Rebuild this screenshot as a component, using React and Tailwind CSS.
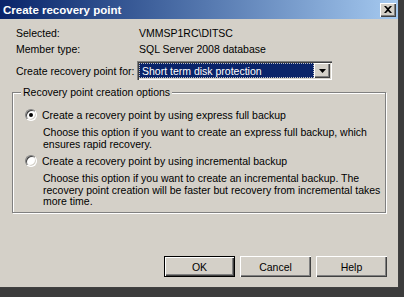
import React from "react";

function Radio({ checked }) {
  return (
    <span className="relative inline-block w-[12px] h-[12px] shrink-0 rounded-full bg-white border border-t-[#808080] border-l-[#808080] border-b-white border-r-white shadow-[inset_1px_1px_0_#404040,inset_-1px_-1px_0_#d4d0c8]">
      {checked && (
        <span className="absolute left-[3px] top-[3px] w-[4px] h-[4px] rounded-full bg-black" />
      )}
    </span>
  );
}

function Button({ children, primary }) {
  return (
    <button
      className={
        primary
          ? "w-[71px] h-[21px] bg-[#d4d0c8] border border-black shadow-[inset_1px_1px_0_#fff,inset_-1px_-1px_0_#404040,inset_-2px_-2px_0_#808080] text-black"
          : "w-[71px] h-[21px] bg-[#d4d0c8] shadow-[inset_1px_1px_0_#fff,inset_-1px_-1px_0_#404040,inset_-2px_-2px_0_#808080] text-black"
      }
    >
      {children}
    </button>
  );
}

export default function App() {
  return (
    <div className="w-[404px] h-[297px] bg-[#3c3c3c] font-['Liberation_Sans',Arial,sans-serif] text-[10.5px] text-black leading-[12px] overflow-hidden">
      <div className="w-[399px] h-[288px] bg-[#d4d0c8] flex flex-col border-r border-b border-[#404040]">
        {/* title bar */}
        <div className="h-[19px] flex items-center justify-between pl-[3px] pr-[2px] bg-gradient-to-r from-[#0a246a] to-[#a6caf0]">
          <span className="text-white font-bold text-[11.5px]">Create recovery point</span>
          <span className="w-[16px] h-[14px] bg-[#d4d0c8] flex items-center justify-center shadow-[inset_1px_1px_0_#fff,inset_-1px_-1px_0_#404040,inset_-2px_-2px_0_#808080]">
            <svg width="8" height="7" viewBox="0 0 8 7">
              <path d="M0 0h2l2 2 2-2h2L5 3.5 8 7H6L4 5 2 7H0l3-3.5z" fill="#000" />
            </svg>
          </span>
        </div>

        <div className="flex flex-col pl-[16px] pt-[6px]">
          <div className="flex h-[16px] items-center">
            <span className="w-[123px]">Selected:</span>
            <span>VMMSP1RC\DITSC</span>
          </div>
          <div className="flex h-[16px] items-center">
            <span className="w-[123px]">Member type:</span>
            <span>SQL Server 2008 database</span>
          </div>
          <div className="flex items-center mt-[4px]">
            <span className="w-[121px] whitespace-nowrap">Create recovery point for:</span>
            <div className="w-[195px] h-[19px] bg-white flex items-stretch p-[2px] shadow-[inset_1px_1px_0_#808080,inset_2px_2px_0_#404040,inset_-1px_-1px_0_#fff,inset_-2px_-2px_0_#d4d0c8]">
              <div className="flex-1 bg-[#0a246a] text-white flex items-center pl-[2px] border border-dotted border-[#c0c0c0]">
                Short term disk protection
              </div>
              <div className="w-[16px] bg-[#d4d0c8] flex items-center justify-center shadow-[inset_1px_1px_0_#fff,inset_-1px_-1px_0_#404040,inset_-2px_-2px_0_#808080]">
                <svg width="7" height="4" viewBox="0 0 7 4">
                  <path d="M0 0h7L3.5 4z" fill="#000" />
                </svg>
              </div>
            </div>
          </div>
        </div>

        {/* group box */}
        <div className="relative mx-[12px] mt-[12px] h-[121px] border border-[#808080] shadow-[1px_1px_0_#fff,inset_1px_1px_0_#fff]">
          <span className="absolute left-[8px] top-[-7px] px-[2px] bg-[#d4d0c8]">
            Recovery point creation options
          </span>
          <div className="flex flex-col pl-[12px] pt-[16px]">
            <div className="flex items-center gap-[5px]">
              <Radio checked />
              <span>Create a recovery point by using express full backup</span>
            </div>
            <p className="pl-[18px] mt-[6px] leading-[11.5px] whitespace-nowrap">
              Choose this option if you want to create an express full backup, which
              <br />
              ensures rapid recovery.
            </p>
            <div className="flex items-center gap-[5px] mt-[5px]">
              <Radio />
              <span>Create a recovery point by using incremental backup</span>
            </div>
            <p className="pl-[18px] mt-[6px] leading-[11.5px] whitespace-nowrap">
              Choose this option if you want to create an incremental backup. The
              <br />
              recovery point creation will be faster but recovery from incremental takes
              <br />
              more time.
            </p>
          </div>
        </div>

        <div className="flex justify-end gap-[5px] pr-[11px] mt-[43px]">
          <Button primary>OK</Button>
          <Button>Cancel</Button>
          <Button>Help</Button>
        </div>
      </div>
    </div>
  );
}
